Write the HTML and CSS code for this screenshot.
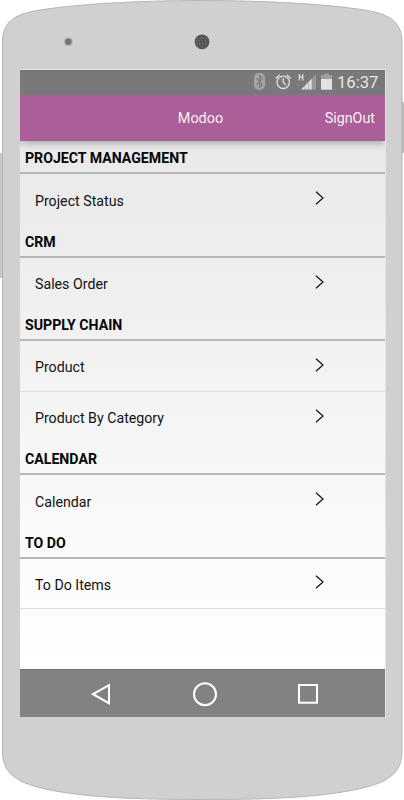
FILE: index.html
```
<!DOCTYPE html>
<html lang="en">
<head>
  <meta charset="UTF-8" />
  <meta name="viewport" content="width=device-width, initial-scale=1.0" />
  <title>Modoo</title>
  <link rel="stylesheet" href="styles.css">
</head>
<body>
  <div class="phone">
    <!-- Device shell -->
    <svg class="shell" viewBox="0 0 404 800" aria-hidden="true">
      <rect x="0" y="154" width="3" height="124" fill="#c8c8c8" />
      <path d="M0 154H2" stroke="#aaa" />
      <rect x="401" y="102" width="3" height="51" fill="#bcbcbc" />
      <path class="shell-body" d="M2.5 42C2.5 24 12 14.5 37 10.5C75 4 140 .5 202 .5S329 4 367 10.5C392 14.5 402 24 402 42V752C402 772 389 781 367 787C325 798 264 799.5 202 799.5S79 798 37 787C15 781 2.5 772 2.5 752Z" />
      <circle cx="68.3" cy="41.7" r="4.5" fill="#b5b5b5" />
      <circle cx="68.3" cy="41.7" r="3.2" fill="#747474" />
      <circle cx="202" cy="41.8" r="7.4" fill="#555" />
      <path d="M197 38H207M196 41H208M196 44H208M198 47H206" stroke="#858585" stroke-width="1" stroke-dasharray="1 2" />
    </svg>

    <div class="screen">
      <div class="status-bar">
        <svg class="status-icons" viewBox="0 0 80 20" aria-hidden="true">
          <rect x="1" y="1" width="11" height="17" rx="5" fill="#a5a5a5" />
          <path d="M3.5 6L9.5 12.5L6.5 15.5V3.5L9.5 6.5L3.5 13" fill="none" stroke="#777" stroke-width="1.1" />
          <g fill="none" stroke="#ddd" stroke-width="1.3">
            <circle cx="30.2" cy="10.3" r="6.2" />
            <path d="M30.2 6V10.5L33 13" />
            <path d="M22.6 6.5L26.7 2.8M33.7 2.8L37.8 6.5" />
          </g>
          <path d="M46.4 2V8.5M49.8 2V8.5M46.4 5.2H49.8" stroke="#e6e6e6" stroke-width="1.2" />
          <path d="M48 17.5L59 6.5V17.5Z" fill="#dedede" />
          <path d="M59 6.5L63 2V17.5H59Z" fill="#999" />
          <path d="M52 12V18M55.5 9V18M59 6V18" stroke="#888" stroke-width=".5" />
          <path d="M68 3H71V1.5H76V3H79V7H68Z" fill="#a0a0a0" />
          <rect x="68" y="7" width="11" height="10.7" fill="#e2e2e2" />
        </svg>
        <span class="clock">16:37</span>
      </div>

      <header class="app-bar">
        <span></span>
        <h1>Modoo</h1>
        <a href="#" class="sign-out">SignOut</a>
      </header>

      <main class="menu">
        <section>
          <h2>PROJECT MANAGEMENT</h2>
          <a href="#" class="item">Project Status<svg class="chevron" viewBox="0 0 9 14"><path d="M1 .7L8 7L1 13.3" /></svg></a>
        </section>
        <section>
          <h2>CRM</h2>
          <a href="#" class="item">Sales Order<svg class="chevron" viewBox="0 0 9 14"><path d="M1 .7L8 7L1 13.3" /></svg></a>
        </section>
        <section>
          <h2>SUPPLY CHAIN</h2>
          <a href="#" class="item ruled">Product<svg class="chevron" viewBox="0 0 9 14"><path d="M1 .7L8 7L1 13.3" /></svg></a>
          <a href="#" class="item">Product By Category<svg class="chevron" viewBox="0 0 9 14"><path d="M1 .7L8 7L1 13.3" /></svg></a>
        </section>
        <section>
          <h2>CALENDAR</h2>
          <a href="#" class="item">Calendar<svg class="chevron" viewBox="0 0 9 14"><path d="M1 .7L8 7L1 13.3" /></svg></a>
        </section>
        <section>
          <h2>TO DO</h2>
          <a href="#" class="item ruled">To Do Items<svg class="chevron" viewBox="0 0 9 14"><path d="M1 .7L8 7L1 13.3" /></svg></a>
        </section>
      </main>

      <nav class="nav-bar" aria-label="System navigation">
        <svg viewBox="0 0 26 26"><path d="M4 13.2L20 4.2V22.2Z" /></svg>
        <svg viewBox="0 0 26 26"><circle cx="13" cy="13.2" r="11" /></svg>
        <svg viewBox="0 0 26 26"><rect x="4" y="4" width="18" height="17.7" /></svg>
      </nav>
    </div>
  </div>
</body>
</html>
```

FILE: styles.css
```
/* Variables & Reset */
:root {
  --purple: #ab5f98;
  --shell: #d0d0d0;
  --rule: #b7b7b7;
}
* { margin: 0; padding: 0; box-sizing: border-box; }
body { font-family: Roboto, sans-serif; background: #fff; color: #111; }
a { text-decoration: none; color: inherit; }

/* Device */
.phone { position: relative; width: 404px; height: 800px; padding: 69px 18px 83px 20px; overflow: hidden; }
.shell { position: absolute; top: 0; left: 0; width: 404px; height: 800px; }
.shell-body { fill: var(--shell); stroke: #aaa; stroke-width: 0.8; }
.screen { position: relative; display: flex; flex-direction: column; width: 366px; height: 648px; border: solid #e4e4e4; border-width: 1px 1px 0 0; }

/* Status bar */
.status-bar { display: flex; justify-content: flex-end; align-items: center; height: 25px; padding-right: 6px; background: #797979; }
.status-icons { width: 80px; height: 20px; margin: -1px 4px 0 0; }
.clock { width: 42px; font-size: 16.6px; line-height: 25px; color: #e6e6e6; white-space: nowrap; }

/* App bar */
.app-bar { position: relative; z-index: 1; display: grid; grid-template-columns: 1fr auto 1fr; align-items: center; height: 46px; padding: 0 10px 0 6px; background: var(--purple); color: #f8eff6; box-shadow: 0 2px 8px rgba(0, 0, 0, 0.3); clip-path: inset(0 0 -16px 0); }
.app-bar h1 { font-size: 14.4px; font-weight: 400; }
.sign-out { justify-self: end; font-size: 14.3px; }

/* Menu list */
.menu { flex: 1; background: linear-gradient(#e9e9e9, #f4f4f4 50%, #fbfbfb 80%, #fff); }
.menu h2 { height: 33px; padding: 0 5px; border-bottom: 2px solid var(--rule); font-size: 14.15px; font-weight: 700; line-height: 34px; color: #050505; }
.item { display: flex; justify-content: space-between; align-items: center; height: 50.5px; padding: 3px 61px 0 15px; font-size: 14.2px; }
.ruled { border-bottom: 1px solid #dedede; }
.chevron { width: 9px; height: 14px; margin-top: -5px; fill: none; stroke: #111; stroke-width: 1.2; }

/* Navigation bar */
.nav-bar { display: flex; justify-content: center; align-items: center; gap: 77px; height: 48px; padding-left: 4px; background: #828282; border-top: 1px solid #6f6f6f; }
.nav-bar svg { width: 26px; height: 26px; fill: none; stroke: #fff; stroke-width: 2; }
```
